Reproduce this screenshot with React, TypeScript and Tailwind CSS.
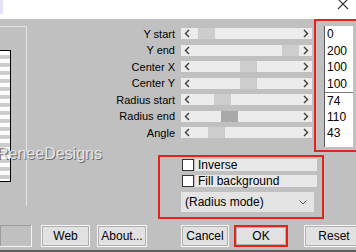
import React from "react";

const rows = [
  { label: "Y start", thumb: 17, dark: false, value: "0" },
  { label: "Y end", thumb: 101, dark: false, value: "200" },
  { label: "Center X", thumb: 59, dark: false, value: "100" },
  { label: "Center Y", thumb: 59, dark: false, value: "100" },
  { label: "Radius start", thumb: 33, dark: false, value: "74" },
  { label: "Radius end", thumb: 40, dark: true, value: "110" },
  { label: "Angle", thumb: 27, dark: false, value: "43" },
];

function Chevron({ dir }: { dir: "left" | "right" }) {
  return (
    <svg width="6" height="9" viewBox="0 0 6 9" className="shrink-0">
      {dir === "left" ? (
        <polyline points="5,1 1.5,4.5 5,8" fill="none" stroke="#3c3c3c" strokeWidth="1.4" />
      ) : (
        <polyline points="1,1 4.5,4.5 1,8" fill="none" stroke="#3c3c3c" strokeWidth="1.4" />
      )}
    </svg>
  );
}

function Slider({ thumb, dark }: { thumb: number; dark: boolean }) {
  return (
    <div className="relative flex h-[11px] w-full items-center justify-between bg-[#ececec] px-[3px]">
      <Chevron dir="left" />
      <div
        className={`absolute top-0 h-[11px] w-[17px] ${dark ? "bg-[#a9a9a9]" : "bg-[#cdcdcd]"}`}
        style={{ left: thumb }}
      />
      <Chevron dir="right" />
    </div>
  );
}

function Button({ label, className }: { label: string; className: string }) {
  return (
    <div
      className={`flex h-[22px] shrink-0 items-center justify-center bg-[#e1e1e1] text-[12px] text-black ${className}`}
    >
      {label}
    </div>
  );
}

export default function App() {
  return (
    <div className="relative h-[252px] w-[356px] overflow-hidden bg-white font-['Liberation_Sans',Arial,sans-serif] text-[11px] text-black">
      {/* title strip */}
      <div className="flex h-[19px] items-start justify-between bg-white">
        <div className="h-[14px] w-[3px] bg-[#e2e2f6]" />
        <svg width="12" height="12" viewBox="0 0 12 12" className="mr-[7px] mt-[-2px]">
          <line x1="1" y1="1" x2="11" y2="11" stroke="#333" strokeWidth="1.1" />
          <line x1="11" y1="1" x2="1" y2="11" stroke="#333" strokeWidth="1.1" />
        </svg>
      </div>

      {/* dialog body */}
      <div className="flex h-[231px] flex-col bg-[#c0c0c0]">
        <div className="flex h-[200px]">
          {/* preview group */}
          <div className="w-[27px] shrink-0">
            <div className="mt-[7px] h-[180px] border-r border-t border-[#e2e2e2]">
              <div className="ml-[-1px] mt-[23px] h-[132px] w-[12px] border border-black bg-[repeating-linear-gradient(to_bottom,#ffffff_0px,#ffffff_4px,#cdcdcd_4px,#cdcdcd_8px)]" />
            </div>
          </div>

          <div className="flex flex-1 flex-col">
            <div className="flex h-[133px]">
              {/* labels */}
              <div className="w-[148px] shrink-0 pt-[6.5px]">
                {rows.map((r) => (
                  <div key={r.label} className="h-[16.5px] text-right leading-[16.5px]">
                    {r.label}
                  </div>
                ))}
              </div>
              {/* sliders */}
              <div className="ml-[6px] w-[131px] shrink-0 pt-[6.5px]">
                {rows.map((r) => (
                  <div key={r.label} className="flex h-[16.5px] items-center">
                    <Slider thumb={r.thumb} dark={r.dark} />
                  </div>
                ))}
              </div>
              {/* values */}
              <div className="ml-[2px] flex-1 border-2 border-r-0 border-[#e3241b] pl-[8px] pt-[5px]">
                <div className="w-[29px] border-l border-[#5a5a5a] bg-white">
                  {rows.map((r, i) => (
                    <div
                      key={r.label}
                      className={`pl-[2px] text-[12px] ${i === 6 ? "h-[22px] leading-[16.5px]" : "h-[16.5px] leading-[16.5px]"} ${i === 4 ? "border-t border-[#7a7a7a]" : ""}`}
                    >
                      {r.value}
                    </div>
                  ))}
                </div>
              </div>
            </div>

            {/* options */}
            <div className="ml-[131px] mt-[3px] flex h-[64px] w-[166px] flex-col border-2 border-[#e3241b] pl-[22px] pt-[2px]">
              <div className="flex h-[12px] items-center">
                <div className="h-[12px] w-[12px] border border-[#333] bg-white" />
                <div className="ml-[1px] h-[12px] w-[122px] bg-[#e8e8e8] pl-[3px] text-[12px] leading-[12px]">Inverse</div>
              </div>
              <div className="mt-[4px] flex h-[12px] items-center">
                <div className="h-[12px] w-[12px] border border-[#333] bg-white" />
                <div className="ml-[1px] h-[12px] w-[122px] bg-[#e8e8e8] pl-[3px] text-[12px] leading-[12px]">Fill background</div>
              </div>
              <div className="ml-[-1px] mt-[5px] flex h-[20px] w-[133px] items-center justify-between bg-[#e4e4e4] pl-[4px] pr-[7px] text-[12px]">
                <span>(Radius mode)</span>
                <svg width="8" height="5" viewBox="0 0 8 5">
                  <polyline points="0.5,0.5 4,4 7.5,0.5" fill="none" stroke="#555" strokeWidth="1" />
                </svg>
              </div>
            </div>
          </div>
        </div>

        {/* buttons */}
        <div className="mt-[6px] flex h-[22px]">
          <div className="h-[22px] w-[32px] shrink-0 border-b border-r border-[#f4f4f4] shadow-[inset_1px_1px_0_#9c9c9c]" />
          <Button label="Web" className="ml-[9px] w-[49px] border border-[#f6f6f6] shadow-[inset_0_0_0_1px_#b0b0b0]" />
          <Button label="About..." className="ml-[7px] w-[50px] border border-[#f6f6f6] shadow-[inset_0_0_0_1px_#b0b0b0]" />
          <Button label="Cancel" className="ml-[34px] w-[48px] border border-[#f6f6f6] shadow-[inset_0_0_0_1px_#b0b0b0]" />
          <Button label="OK" className="ml-[5px] w-[54px] border-2 border-[#e3241b] shadow-[inset_0_0_0_1px_#b0b0b0]" />
          <Button label="Reset" className="ml-[16px] w-[60px] border border-[#f6f6f6] shadow-[inset_0_0_0_1px_#b0b0b0]" />
        </div>
      </div>
      <div className="h-[2px] bg-[#5e5e5e]" />

      {/* watermark */}
      <div className="pointer-events-none absolute left-[-3px] top-[142px] text-[16px] text-[#e4e4e4] [text-shadow:1px_1px_0_#6a6a6a]">
        ReneeDesigns
      </div>
    </div>
  );
}
